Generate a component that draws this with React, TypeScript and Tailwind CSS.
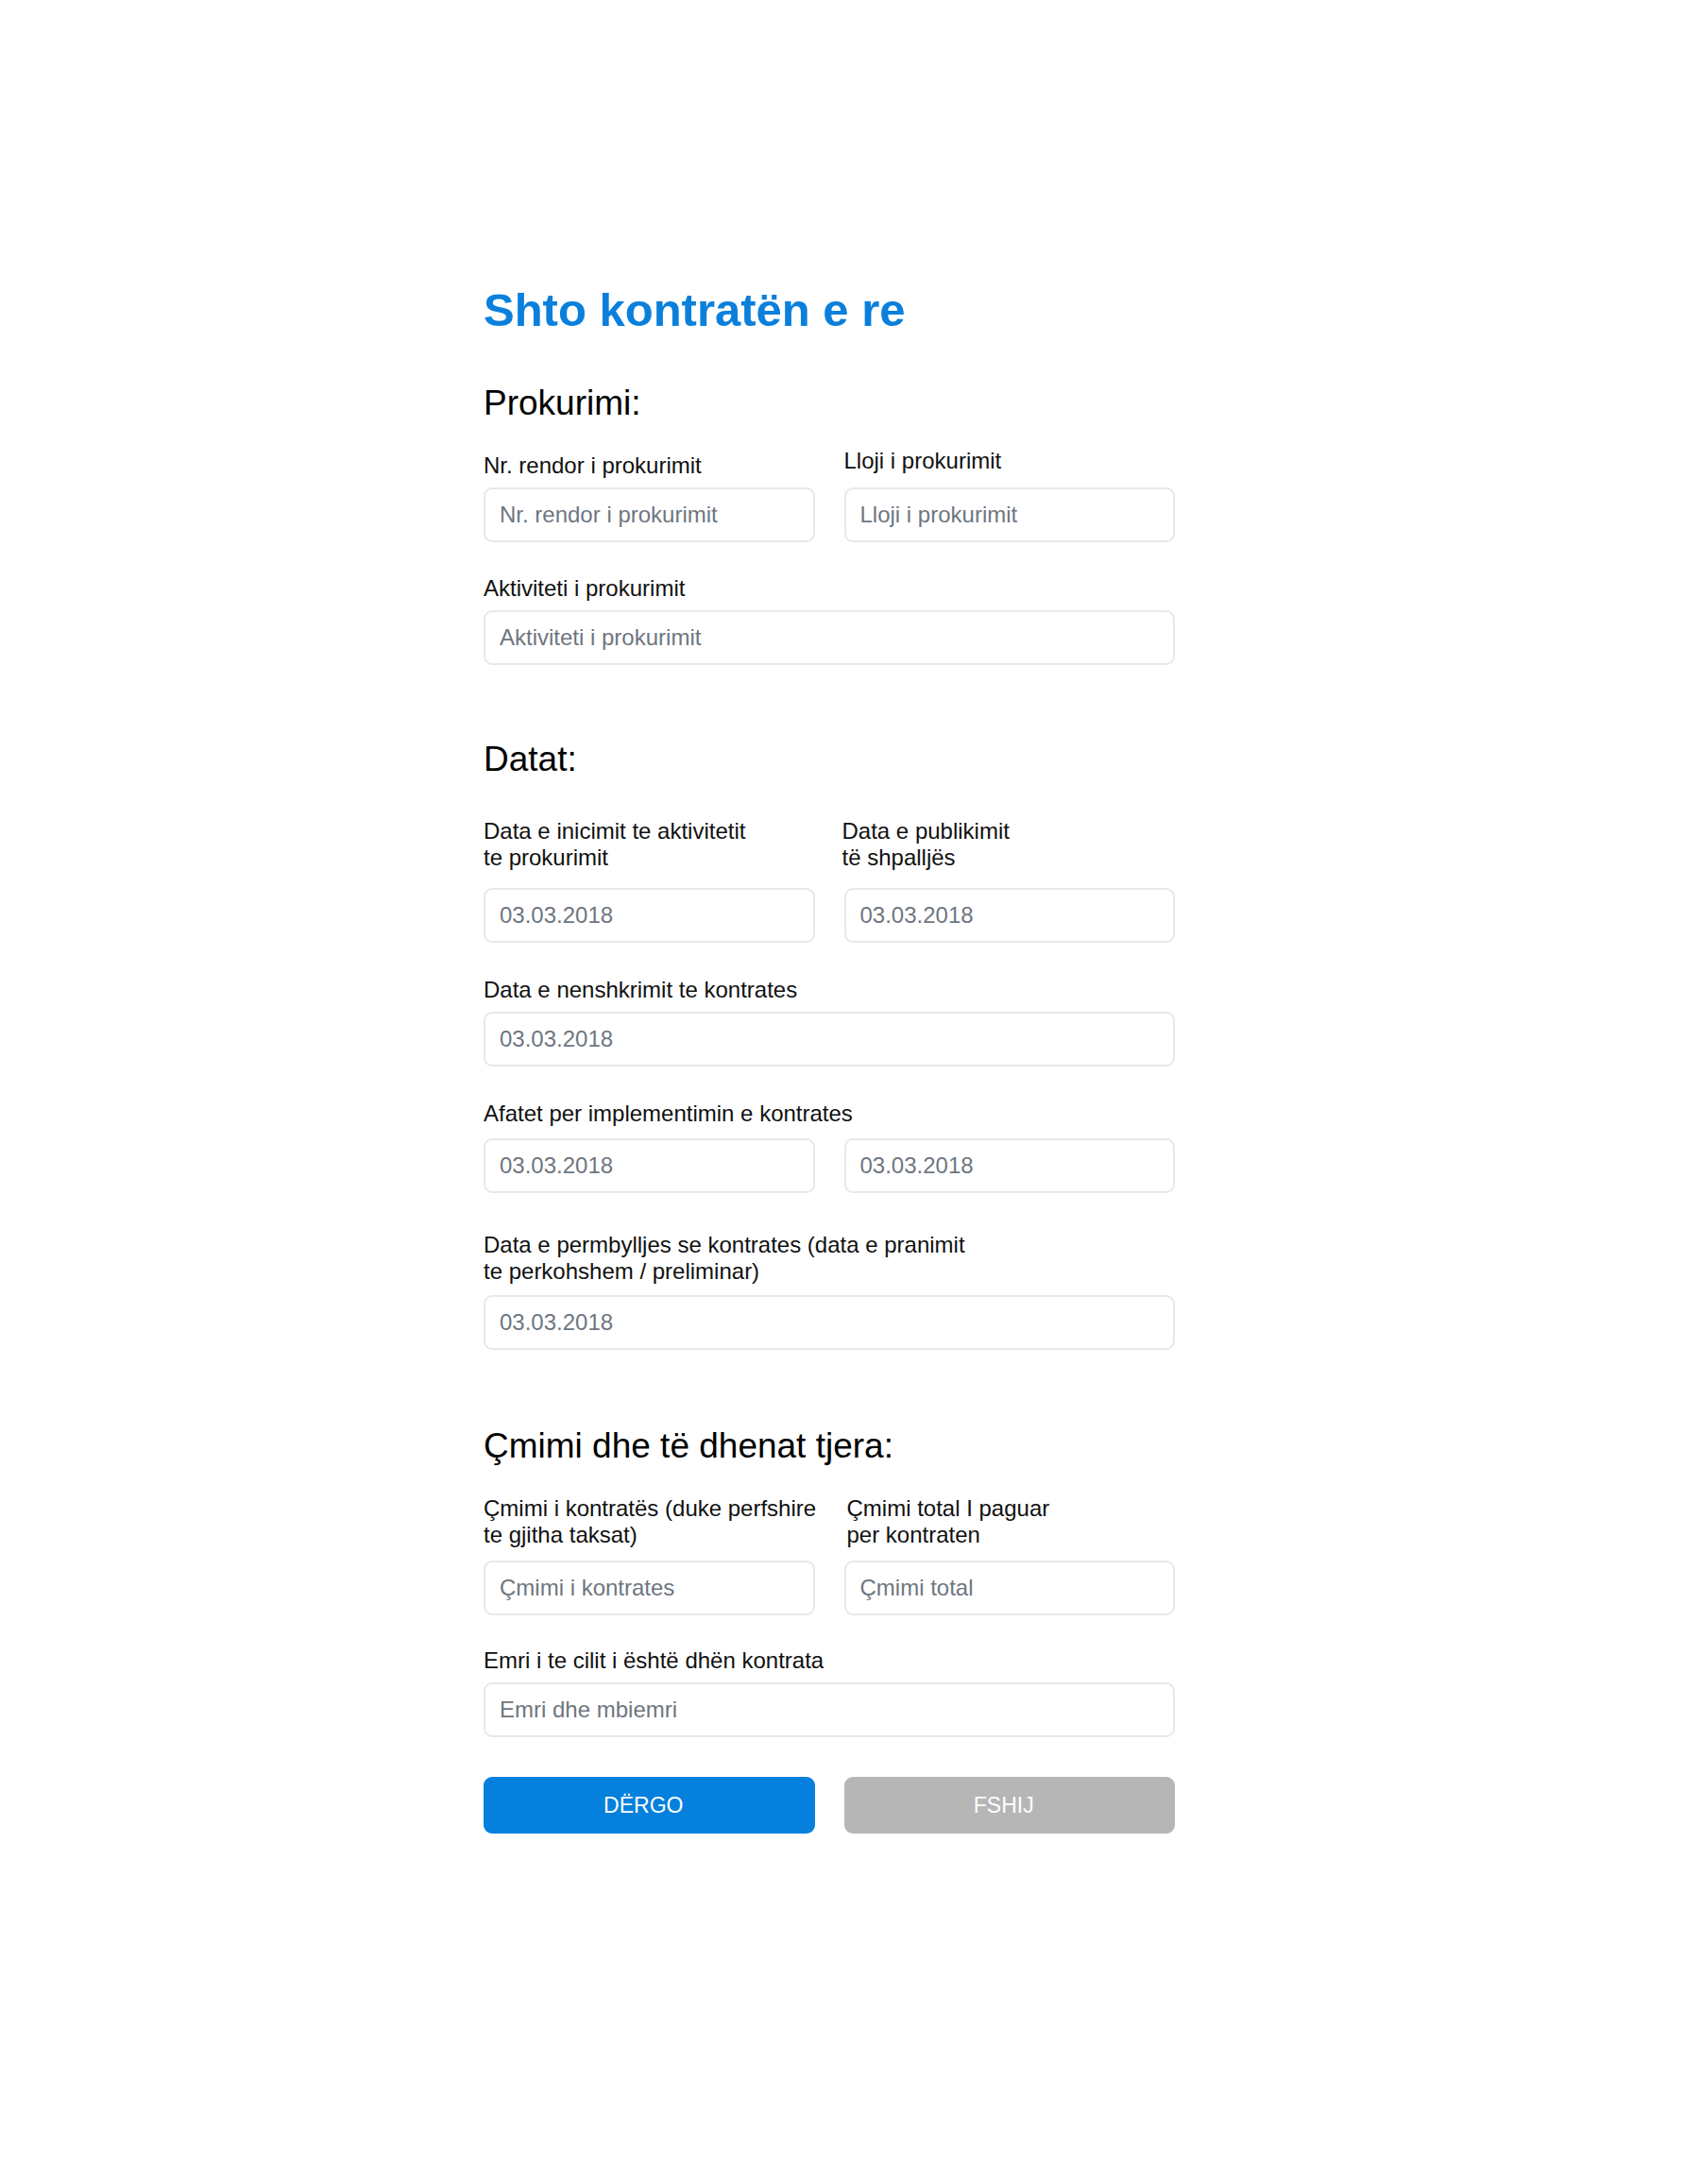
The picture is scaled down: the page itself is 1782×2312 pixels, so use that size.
import React from "react";

function Field({
    label,
    placeholder,
    labelClass = "mb-[9px]",
}: {
    label: React.ReactNode;
    placeholder: string;
    labelClass?: string;
}) {
    return (
        <div className="flex flex-col justify-end">
            <label className={`block whitespace-nowrap text-[24px] leading-[28px] text-[#111] ${labelClass}`}>{label}</label>
            <input
                type="text"
                placeholder={placeholder}
                className="h-[58px] w-full rounded-[9px] border-2 border-[#e6e8ec] bg-white pl-[15px] text-[24px] text-[#111] outline-none placeholder:text-[#6e7680]"
            />
        </div>
    );
}

function Heading({ children, className = "" }: { children: React.ReactNode; className?: string }) {
    return <h2 className={`text-[37px] leading-[44px] text-black ${className}`}>{children}</h2>;
}

export default function App() {
    return (
        <div className="min-h-[2312px] bg-white font-['Liberation_Sans',Arial,sans-serif]">
            <div className="ml-[512px] w-[732px] pt-[300px]">
                <h1 className="text-[49px] font-bold leading-[56px] text-[#0a80dc]">Shto kontratën e re</h1>

                {/* Prokurimi */}
                <Heading className="mt-[49px] mb-[25px]">Prokurimi:</Heading>
                <div className="grid grid-cols-2 items-end gap-x-[31px]">
                    <Field label="Nr. rendor i prokurimit" placeholder="Nr. rendor i prokurimit" />
                    <Field label="Lloji i prokurimit" placeholder="Lloji i prokurimit" labelClass="mb-[14px]" />
                </div>
                <div className="mt-[35px]">
                    <Field label="Aktiviteti i prokurimit" placeholder="Aktiviteti i prokurimit" />
                </div>

                {/* Datat */}
                <Heading className="mt-[78px] mb-[40px]">Datat:</Heading>
                <div className="grid grid-cols-2 items-end gap-x-[31px]">
                    <Field
                        label={<>Data e inicimit te aktivitetit<br />te prokurimit</>}
                        placeholder="03.03.2018"
                        labelClass="mb-[18px]"
                    />
                    <Field
                        label={<>Data e publikimit<br />të shpalljës</>}
                        placeholder="03.03.2018"
                        labelClass="mb-[18px] -ml-[2px]"
                    />
                </div>
                <div className="mt-[36px]">
                    <Field label="Data e nenshkrimit te kontrates" placeholder="03.03.2018" />
                </div>
                <div className="mt-[36px]">
                    <label className="mb-[12px] block text-[24px] leading-[28px] text-[#111]">
                        Afatet per implementimin e kontrates
                    </label>
                    <div className="grid grid-cols-2 gap-x-[31px]">
                        <input
                            type="text"
                            placeholder="03.03.2018"
                            className="h-[58px] w-full rounded-[9px] border-2 border-[#e6e8ec] bg-white pl-[15px] text-[24px] outline-none placeholder:text-[#6e7680]"
                        />
                        <input
                            type="text"
                            placeholder="03.03.2018"
                            className="h-[58px] w-full rounded-[9px] border-2 border-[#e6e8ec] bg-white pl-[15px] text-[24px] outline-none placeholder:text-[#6e7680]"
                        />
                    </div>
                </div>
                <div className="mt-[41px]">
                    <Field
                        label={<>Data e permbylljes se kontrates (data e pranimit<br />te perkohshem / preliminar)</>}
                        placeholder="03.03.2018"
                        labelClass="mb-[11px]"
                    />
                </div>

                {/* Çmimi */}
                <Heading className="mt-[80px] mb-[30px]">Çmimi dhe të dhenat tjera:</Heading>
                <div className="grid grid-cols-2 items-end gap-x-[31px]">
                    <Field
                        label={<>Çmimi i kontratës (duke perfshire<br />te gjitha taksat)</>}
                        placeholder="Çmimi i kontrates"
                        labelClass="mb-[13px]"
                    />
                    <Field
                        label={<>Çmimi total I paguar<br />per kontraten</>}
                        placeholder="Çmimi total"
                        labelClass="mb-[13px] ml-[3px]"
                    />
                </div>
                <div className="mt-[34px]">
                    <Field label="Emri i te cilit i është dhën kontrata" placeholder="Emri dhe mbiemri" />
                </div>

                <div className="mt-[42px] grid grid-cols-2 gap-x-[31px]">
                    <button className="h-[60px] rounded-[9px] bg-[#0580dc] pr-[12px] text-[23px] text-white">DËRGO</button>
                    <button className="h-[60px] rounded-[9px] bg-[#b6b6b6] pr-[12px] text-[23px] text-white">FSHIJ</button>
                </div>
            </div>
        </div>
    );
}
